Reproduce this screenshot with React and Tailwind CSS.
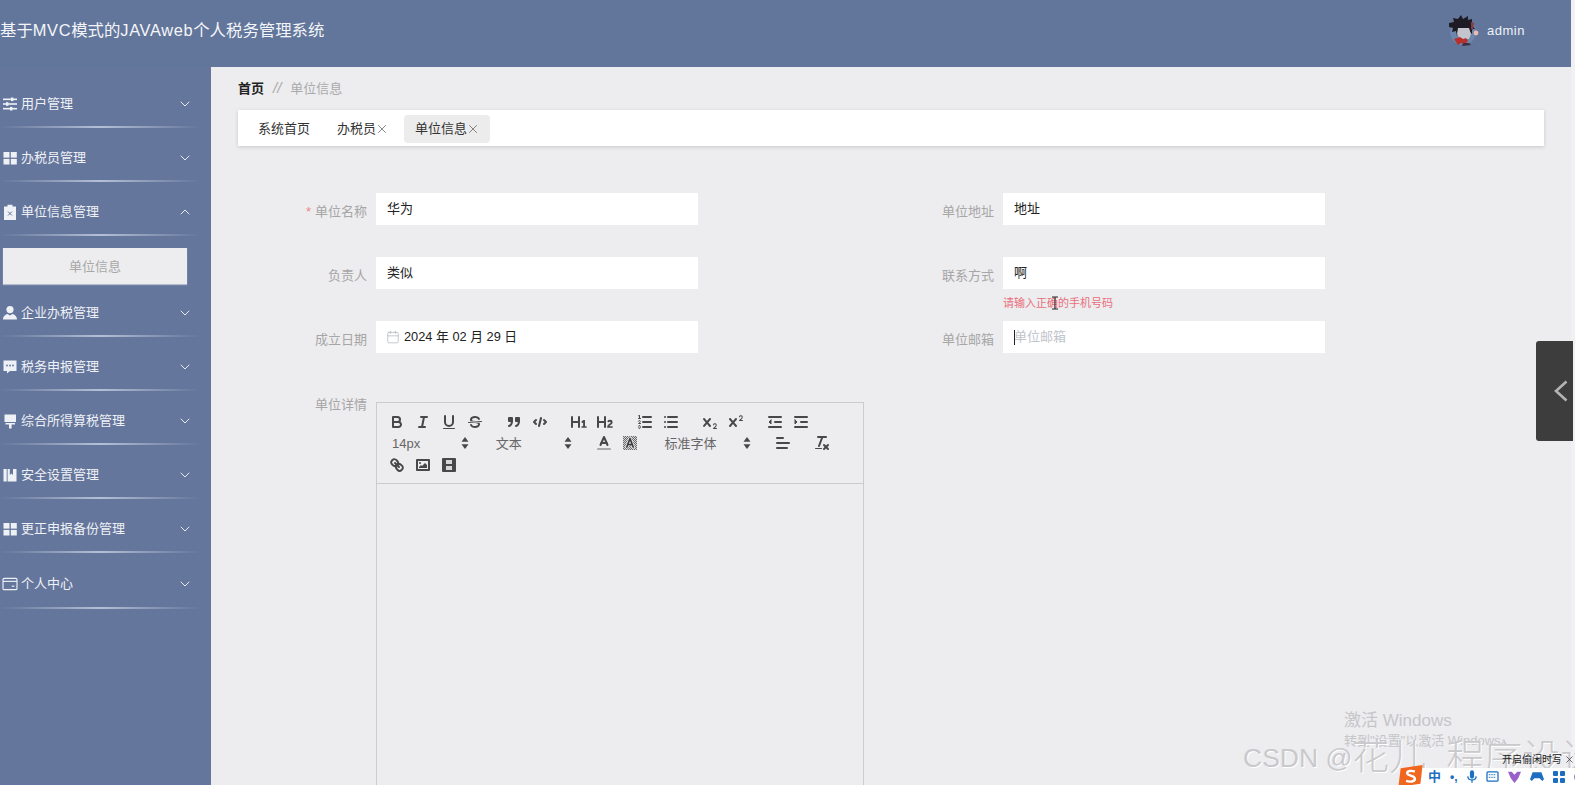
import React from "react";
import { ChevronDown, ChevronUp, X, Calendar } from "lucide-react";

const I = ({ children, className = "" }) => (
  <svg viewBox="0 0 18 18" width="18" height="18" fill="none" stroke="#484848" strokeWidth="2" strokeLinecap="round" strokeLinejoin="round" className={className}>
    {children}
  </svg>
);
const F = (p) => <path fill="#484848" stroke="none" {...p} />;

const toolIcons = {
  bold: <><path d="M5,4H9.5A2.5,2.5,0,0,1,12,6.5v0A2.5,2.5,0,0,1,9.5,9H5V4Z" /><path d="M5,9h5.5A2.5,2.5,0,0,1,13,11.5v0A2.5,2.5,0,0,1,10.5,14H5V9Z" /></>,
  italic: <><line x1="7" x2="13" y1="4" y2="4" /><line x1="5" x2="11" y1="14" y2="14" /><line x1="8" x2="10" y1="14" y2="4" /></>,
  underline: <><path d="M5,3V9a4,4,0,0,0,4,4H9a4,4,0,0,0,4-4V3" /><rect fill="#484848" stroke="none" height="1" rx=".5" width="12" x="3" y="15" /></>,
  strike: <><line strokeWidth="1" x1="15.5" x2="2.5" y1="8.5" y2="9.5" /><F d="M9.007,8C6.542,7.791,6,7.519,6,6.5,6,5.792,7.283,5,9,5c1.571,0,2.765.679,2.969,1.309a1,1,0,0,0,1.9-.617C13.356,4.106,11.354,3,9,3,6.2,3,4,4.538,4,6.5a3.2,3.2,0,0,0,.5,1.843Z" /><F d="M8.984,10C11.457,10.208,12,10.479,12,11.5c0,.708-1.283,1.5-3,1.5-1.571,0-2.765-.679-2.969-1.309a1,1,0,1,0-1.9.617C4.644,13.894,6.646,15,9,15c2.8,0,5-1.538,5-3.5a3.2,3.2,0,0,0-.5-1.843Z" /></>,
  quote: <><rect fill="#484848" height="3" width="3" x="4" y="5" /><rect fill="#484848" height="3" width="3" x="11" y="5" /><path d="M7,8c0,4.031-3,5-3,5" /><path d="M14,8c0,4.031-3,5-3,5" /></>,
  code: <><polyline points="5 7 3 9 5 11" /><polyline points="13 7 15 9 13 11" /><line x1="10" x2="8" y1="5" y2="13" /></>,
  h1: <F d="M10,4V14a1,1,0,0,1-2,0V10H3v4a1,1,0,0,1-2,0V4A1,1,0,0,1,3,4V8H8V4a1,1,0,0,1,2,0Zm6.06787,9.209H14.98975V7.59863a.54085.54085,0,0,0-.605-.60547h-.62744a1.01119,1.01119,0,0,0-.748.29688L11.645,8.56641a.5435.5435,0,0,0-.022.8584l.28613.30762a.53861.53861,0,0,0,.84717.0332l.09912-.08789a1.2137,1.2137,0,0,0,.2417-.35254h.02246s-.01123.30859-.01123.60547V13.209H12.041a.54085.54085,0,0,0-.605.60547v.43945a.54085.54085,0,0,0,.605.60547h4.02686a.54085.54085,0,0,0,.605-.60547v-.43945A.54085.54085,0,0,0,16.06787,13.209Z" />,
  h2: <F d="M16.73975,13.81445v.43945a.54085.54085,0,0,1-.605.60547H11.855a.58392.58392,0,0,1-.64893-.60547V14.0127c0-2.90527,3.39941-3.42187,3.39941-4.55469a.77675.77675,0,0,0-.84717-.78125,1.17684,1.17684,0,0,0-.83594.38477c-.2749.26367-.561.374-.85791.13184l-.4292-.34082c-.30811-.24219-.38525-.51758-.1543-.81445a2.97155,2.97155,0,0,1,2.45361-1.17676,2.45393,2.45393,0,0,1,2.68408,2.40918c0,2.45312-3.1792,2.92676-3.27832,3.93848h2.79443A.54085.54085,0,0,1,16.73975,13.81445ZM9,3A.99974.99974,0,0,0,8,4V8H3V4A1,1,0,0,0,1,4V14a1,1,0,0,0,2,0V10H8v4a1,1,0,0,0,2,0V4A.99974.99974,0,0,0,9,3Z" />,
  ol: <><line x1="7" x2="15" y1="4" y2="4" /><line x1="7" x2="15" y1="9" y2="9" /><line x1="7" x2="15" y1="14" y2="14" /><line strokeWidth="1" x1="2.5" x2="4.5" y1="5.5" y2="5.5" /><F d="M3.5,6A0.5,0.5,0,0,1,3,5.5V3.085l-0.276.138A0.5,0.5,0,0,1,2.053,3c-0.124-.247-0.023-0.324.224-0.447l1-.5A0.5,0.5,0,0,1,4,2.5v3A0.5,0.5,0,0,1,3.5,6Z" /><path strokeWidth="1" d="M4.5,10.5h-2c0-.234,1.85-1.076,1.85-2.234A0.959,0.959,0,0,0,2.5,8.156" /><path strokeWidth="1" d="M2.5,14.846a0.959,0.959,0,0,0,1.85-.109A0.7,0.7,0,0,0,3.75,14a0.688,0.688,0,0,0,.6-0.736,0.959,0.959,0,0,0-1.85-.109" /></>,
  ul: <><line x1="6" x2="15" y1="4" y2="4" /><line x1="6" x2="15" y1="9" y2="9" /><line x1="6" x2="15" y1="14" y2="14" /><line x1="3" x2="3" y1="4" y2="4" /><line x1="3" x2="3" y1="9" y2="9" /><line x1="3" x2="3" y1="14" y2="14" /></>,
  sub: <><F d="M15.5,15H13.861a3.858,3.858,0,0,0,1.914-2.975,1.8,1.8,0,0,0-1.6-1.751A1.921,1.921,0,0,0,12.021,11.7a0.50013,0.50013,0,1,0,.957.291h0a0.914,0.914,0,0,1,1.053-.725,0.81,0.81,0,0,1,.744.762c0,1.076-1.16971,1.86982-1.93971,2.43082A1.45639,1.45639,0,0,0,12,15.5a0.5,0.5,0,0,0,.5.5h3A0.5,0.5,0,0,0,15.5,15Z" /><F d="M9.65,5.241a1,1,0,0,0-1.409.108L6,7.964,3.759,5.349A1,1,0,0,0,2.192,6.59178Q2.25,6.674,2.317,6.751L4.683,9.5,2.317,12.249a1,1,0,0,0,1.519,1.3L6,11.036l2.241,2.615a1,1,0,0,0,1.519-1.3L7.317,9.5,9.759,6.651A1,1,0,0,0,9.65,5.241Z" /></>,
  sup: <><F d="M15.5,7H13.861a4.015,4.015,0,0,0,1.914-2.975,1.8,1.8,0,0,0-1.6-1.751A1.922,1.922,0,0,0,12.021,3.7a0.5,0.5,0,1,0,.957.291,0.917,0.917,0,0,1,1.053-.725,0.81,0.81,0,0,1,.744.762c0,1.077-1.164,1.925-1.934,2.486A1.423,1.423,0,0,0,12,7.5a0.5,0.5,0,0,0,.5.5h3A0.5,0.5,0,0,0,15.5,7Z" /><F d="M9.651,5.241a1,1,0,0,0-1.41.108L6,7.964,3.759,5.349a1,1,0,1,0-1.519,1.3L4.683,9.5,2.241,12.35a1,1,0,1,0,1.519,1.3L6,11.036l2.241,2.615a1,1,0,0,0,1.519-1.3L7.317,9.5,9.759,6.651A1,1,0,0,0,9.651,5.241Z" /></>,
  outdent: <><line x1="3" x2="15" y1="14" y2="14" /><line x1="3" x2="15" y1="4" y2="4" /><line x1="9" x2="15" y1="9" y2="9" /><polyline fill="#484848" stroke="#484848" strokeWidth="1" points="5 7 5 11 3 9 5 7" /></>,
  indent: <><line x1="3" x2="15" y1="14" y2="14" /><line x1="3" x2="15" y1="4" y2="4" /><line x1="9" x2="15" y1="9" y2="9" /><polyline fill="#484848" stroke="#484848" strokeWidth="1" points="3 7 3 11 5 9 3 7" /></>,
  color: <><line stroke="#a8a8a8" x1="3" x2="15" y1="15" y2="15" /><polyline points="5.5 11 9 3 12.5 11" /><line x1="11.63" x2="6.38" y1="9" y2="9" /></>,
  background: (
    <>
      <defs>
        <pattern id="bgdots" width="2" height="2" patternUnits="userSpaceOnUse">
          <rect width="2" height="2" fill="#d4d4d6" stroke="none" />
          <rect width="1" height="1" fill="#6a6a6a" stroke="none" />
          <rect x="1" y="1" width="1" height="1" fill="#6a6a6a" stroke="none" />
        </pattern>
      </defs>
      <rect x="2" y="2" width="14" height="14" fill="url(#bgdots)" stroke="none" />
      <polyline stroke="#e4e4e6" strokeWidth="3.4" points="5.8 13 9 4.500 12.200 13" />
      <polyline stroke="#3c3c3c" strokeWidth="1.7" points="5.8 13 9 4.500 12.200 13" />
      <line stroke="#3c3c3c" strokeWidth="1.5" x1="11.2" x2="6.8" y1="10.500" y2="10.500" />
    </>
  ),
  align: <><line x1="3" x2="15" y1="9" y2="9" /><line x1="3" x2="13" y1="14" y2="14" /><line x1="3" x2="9" y1="4" y2="4" /></>,
  clean: <><line x1="5" x2="13" y1="3" y2="3" /><line x1="6" x2="9.35" y1="12" y2="3" /><line x1="11" x2="15" y1="11" y2="15" /><line x1="15" x2="11" y1="11" y2="15" /><rect fill="#484848" stroke="none" rx=".5" width="7" height="1" x="2" y="14" /></>,
  link: <><line x1="7" x2="11" y1="7" y2="11" /><path d="M8.9,4.577a3.476,3.476,0,0,1,.36,4.679A3.476,3.476,0,0,1,4.577,8.9C3.185,7.5,2.035,6.4,4.217,4.217S7.5,3.185,8.9,4.577Z" /><path d="M13.423,9.1a3.476,3.476,0,0,0-4.679-.36,3.476,3.476,0,0,0,.36,4.679c1.392,1.392,2.5,2.542,4.679.36S14.815,10.5,13.423,9.1Z" /></>,
  image: <><rect height="10" width="12" x="3" y="4" /><circle fill="#484848" stroke="none" cx="6" cy="7" r="1" /><polyline fill="#484848" stroke="none" points="5 12 5 11 7 9 8 10 11 7 13 9 13 12 5 12" /></>,
  video: <><rect fill="#484848" stroke="none" x="2" y="2" width="14" height="14" rx="1" /><rect fill="#d8d8da" stroke="none" x="6" y="4" width="6" height="4" /><rect fill="#d8d8da" stroke="none" x="6" y="10" width="6" height="4" /></>,
};

const Tool = ({ k }) => (
  <span className="flex h-[21.5px] w-[26px] items-center justify-center">
    <I>{toolIcons[k]}</I>
  </span>
);

const Group = ({ items }) => (
  <span className="mr-[13.2px] flex">
    {items.map((k) => (
      <Tool key={k} k={k} />
    ))}
  </span>
);

const Picker = ({ label, w }) => (
  <span className={`mr-[13.2px] flex h-[21.5px] items-center justify-between pl-[8px] pr-[1px] text-[13px] text-[#666] ${w}`}>
    <span>{label}</span>
    <svg viewBox="0 0 18 18" width="18" height="18" fill="#484848">
      <polygon points="9 3 12.500 7.800 5.500 7.800" />
      <polygon points="9 15 12.500 10.200 5.500 10.200" />
    </svg>
  </span>
);

const W = ({ children }) => (
  <svg viewBox="0 0 16 16" width="16" height="16" fill="#eef1f6" className="shrink-0">
    {children}
  </svg>
);

const menuIcons = {
  sliders: <W><rect x="1" y="2.5" width="14" height="1.6" /><rect x="1" y="7.2" width="14" height="1.6" /><rect x="1" y="11.9" width="14" height="1.6" /><rect x="9" y="1.5" width="2.4" height="3.6" /><rect x="4" y="6.2" width="2.4" height="3.6" /><rect x="8" y="10.9" width="2.4" height="3.6" /></W>,
  grid: <W><rect x="1.5" y="2" width="6" height="5.6" /><rect x="8.8" y="2" width="6" height="5.6" /><rect x="1.5" y="8.9" width="6" height="5.6" /><rect x="8.8" y="8.9" width="6" height="5.6" /></W>,
  clip: <W><path d="M2 2.500h3.500V.8h5v1.700H14v14.200H2z" /><path d="M6 7.500l4 4M10 7.500l-4 4" stroke="#64759d" strokeWidth="1" /></W>,
  user: <W><circle cx="8" cy="4.600" r="3.600" /><path d="M1 14.500c0-3.200 2.600-5 4.600-5.400L8 10.600l2.400-1.500c2 .4 4.600 2.200 4.600 5.400z" /></W>,
  chat: <W><path d="M1.500 1.500h13v10.500H8l-3 2.600V12H1.500z" /><circle cx="5" cy="6.500" r=".9" fill="#64759d" /><circle cx="8" cy="6.500" r=".9" fill="#64759d" /><circle cx="11" cy="6.500" r=".9" fill="#64759d" /></W>,
  brush: <W><rect x="2.500" y="1.500" width="11.500" height="7.500" /><path d="M3.500 10h9.500v1.600H9.600V15.500H7v-3.900H3.500z" /></W>,
  book: <W><rect x="1.500" y="2" width="3.200" height="12.500" /><path d="M5.600 2h2.200v6l1.600-1.400L11 8V2h3.500v12.500H5.600z" /></W>,
  card: (
    <svg viewBox="0 0 18 16" width="16" height="14" fill="none" stroke="#eef1f6" strokeWidth="1.3" className="shrink-0">
      <rect x="1" y="1.500" width="16" height="13" rx="1.500" />
      <line x1="1" x2="17" y1="5" y2="5" />
      <line x1="11" x2="14" y1="10.500" y2="10.500" />
    </svg>
  ),
};

const menus = [
  { t: "用户管理", i: "sliders" },
  { t: "办税员管理", i: "grid" },
  { t: "单位信息管理", i: "clip", open: true },
  { t: "企业办税管理", i: "user", pt: "pt-[15px]" },
  { t: "税务申报管理", i: "chat" },
  { t: "综合所得算税管理", i: "brush" },
  { t: "安全设置管理", i: "book" },
  { t: "更正申报备份管理", i: "grid" },
  { t: "个人中心", i: "card", pt: "pt-[17px]", pb: "pb-[9px]" },
];

const MenuItem = ({ m }) => (
  <div>
    <div className={`${m.pt || "pt-[16px]"} ${m.pb || "pb-[8px]"}`}>
      <div className="flex h-[28px] items-center pl-[2px] pr-[18px] text-[13px] text-[#eef1f6]">
        <span className="flex w-[19px] shrink-0">{menuIcons[m.i]}</span>
        <span className="flex-1">{m.t}</span>
        {m.open ? <ChevronUp size={16} strokeWidth={1.5} color="#e6eaf1" /> : <ChevronDown size={16} strokeWidth={1.5} color="#e6eaf1" />}
      </div>
    </div>
    <div className="h-[2px] w-[200px] bg-linear-to-r from-transparent via-[#b4c0d6] to-transparent" />
    {m.open && (
      <div className="ml-[3px] mt-[12px] flex h-[36px] w-[184px] items-center justify-center bg-[#ededef] pt-[1px] text-[13px] text-[#a8a8a8] shadow-[0_1px_1px_rgba(255,255,255,0.5)]">
        单位信息
      </div>
    )}
  </div>
);

const Field = ({ label, required, children }) => (
  <div className="flex h-[32px] items-center">
    <label className="mr-[9px] w-[129px] pt-[5px] text-right text-[13px] text-[#a6a6a6]">
      {required && <span className="mr-[4px] text-[#ee8a8a]">*</span>}
      {label}
    </label>
    <div className="relative flex h-[32px] w-[322px] items-center bg-white px-[11px] text-[13px] text-[#222]">{children}</div>
  </div>
);

const Avatar = () => (
  <svg viewBox="0 0 30 32" width="30" height="32">
    <circle cx="14" cy="17" r="13" fill="#6d86ab" />
    <path d="M0 8l5-1-1-4 5 1 3-4 2 4 5-3 0 4 4-1 0 6 3 4-3 0 0 5-4-4-8 0-3 6-1-5-4 1 1-4-4-1z" fill="#1e1b24" />
    <path d="M9 13h11l2 6-2 5h-9l-3-5z" fill="#c4c5cc" />
    <path d="M22 7l3 1-1 7-2-1z" fill="#8a3a40" />
    <circle cx="27" cy="18" r="2.400" fill="#e8bcae" />
    <path d="M5 24l6-2 3 2 3-1 2 3-3 3-4-1-3 2z" fill="#b8302e" />
    <path d="M14 28h6l2 2-9 1z" fill="#3a3040" />
  </svg>
);

export default function App() {
  return (
    <div className="relative flex h-[785px] w-[1575px] overflow-hidden bg-[#f1f0f3] [font-family:'Liberation_Sans','Noto_Sans_CJK_SC',sans-serif]">
      <div className="flex w-[1571px] shrink-0 flex-col">
        <header className="flex h-[67px] shrink-0 items-center justify-between bg-[#62759b] pb-[6px] pr-[46px]">
          <h1 className="text-[16.4px] font-normal text-[#f4f5f8]">
            基于<span className="tracking-[0.65px]">MVC</span>模式的<span className="tracking-[0.65px]">JAVAweb</span>个人税务管理系统
          </h1>
          <div className="flex items-center gap-[8px]">
            <Avatar />
            <span className="text-[13px] tracking-[0.5px] text-[#eef2f8]">admin</span>
          </div>
        </header>
        <div className="flex min-h-0 flex-1">
          <aside className="w-[211px] shrink-0 bg-[#65769c] pt-[7px]">
            {menus.map((m) => (
              <MenuItem key={m.t + m.i} m={m} />
            ))}
          </aside>
          <main className="min-w-0 flex-1 bg-[#edecef] px-[27px]">
            <div className="flex h-[43px] items-center text-[13px]">
              <span className="font-bold text-[#222]">首页</span>
              <span className="mx-[9px] text-[15px] italic text-[#aaa]">//</span>
              <span className="text-[#aaa]">单位信息</span>
            </div>
            <div className="flex h-[36px] items-center gap-[5px] bg-white pl-[9px] pt-[2px] text-[13px] text-[#333] shadow-[0_1px_4px_rgba(0,0,0,0.16)]">
              <span className="flex h-[28px] items-center px-[11px]">系统首页</span>
              <span className="flex h-[28px] items-center pl-[11px] pr-[10px]">
                办税员
                <X size={14} strokeWidth={1.2} color="#555" className="-ml-px" />
              </span>
              <span className="flex h-[28px] items-center rounded-[4px] bg-[#ececec] pl-[11px] pr-[10px]">
                单位信息
                <X size={14} strokeWidth={1.2} color="#555" className="-ml-px" />
              </span>
            </div>

            <div className="mt-[47px] grid grid-cols-[627px_1fr] gap-y-[32px]">
              <Field label="单位名称" required>华为</Field>
              <Field label="单位地址">地址</Field>
              <Field label="负责人">类似</Field>
              <Field label="联系方式">
                啊
                <span className="absolute left-0 top-[39px] text-[11px] leading-[14px] text-[#e9707c]">请输入正确的手机号码</span>
                <svg viewBox="0 0 8 14" width="8" height="14" fill="none" stroke="#222" strokeWidth="1" className="absolute left-[48px] top-[39px]">
                  <path d="M1 1h6M4 1v12M1 13h6" />
                </svg>
              </Field>
              <Field label="成立日期">
                <Calendar size={14} strokeWidth={1.2} color="#aeb1b8" className="-ml-px mr-[4px] shrink-0" />
                <span className="text-[12.8px]">2024 年 02 月 29 日</span>
              </Field>
              <Field label="单位邮箱">
                <span className="absolute left-[11px] top-[9px] h-[15px] w-px bg-[#222]" />
                <span className="text-[#c0c4cc]">单位邮箱</span>
              </Field>
            </div>

            <div className="mt-[49px] flex">
              <label className="-mt-[7px] mr-[9px] w-[129px] text-right text-[13px] text-[#a6a6a6]">单位详情</label>
              <div className="w-[488px] border border-[#ccc]">
                <div className="flex flex-wrap border-b border-[#ccc] pb-[7px] pl-[7px] pr-[6px] pt-[8px]">
                  <Group items={["bold", "italic", "underline", "strike"]} />
                  <Group items={["quote", "code"]} />
                  <Group items={["h1", "h2"]} />
                  <Group items={["ol", "ul"]} />
                  <Group items={["sub", "sup"]} />
                  <Group items={["outdent", "indent"]} />
                  <Picker label="14px" w="w-[90.5px]" />
                  <Picker label="文本" w="w-[90.5px]" />
                  <Group items={["color", "background"]} />
                  <Picker label="标准字体" w="w-[100px]" />
                  <Group items={["align"]} />
                  <Group items={["clean"]} />
                  <Group items={["link", "image", "video"]} />
                </div>
                <div className="h-[400px]" />
              </div>
            </div>
          </main>
        </div>
      </div>

      <div className="absolute left-[1536px] top-[341px] flex h-[100px] w-[37px] items-center justify-end rounded-l-[3px] bg-[#3d3d3d] pr-[5px]">
        <svg viewBox="0 0 14 22" width="14" height="22" fill="none" stroke="#b4b4b4" strokeWidth="2.6">
          <polyline points="12.500 1.500 2 11 12.500 20.500" />
        </svg>
      </div>

      <div className="absolute left-[1344px] top-[710px] text-[17px] leading-[22px] text-[#c6c6c9]">激活 Windows</div>
      <div className="absolute left-[1344px] top-[733px] text-[13px] leading-[16px] text-[#c6c6c9]">转到"设置"以激活 Windows。</div>
      <div className="absolute left-[1243px] top-[738px] flex h-[40px] items-center whitespace-nowrap text-[26.5px] leading-[34px] text-[#c9c9cc] [text-shadow:1px_1px_0_#fff]">
        <span>CSDN @</span>
        <span className="text-[37px] font-light">花儿</span>
        <span className="inline-block w-[20px] -translate-y-[16px] text-[16px]">、</span>
        <span className="text-[38px] font-light">程序设计</span>
      </div>

      <div className="absolute left-[1502px] top-[750px] flex h-[18px] w-[73px] items-center justify-between whitespace-nowrap text-[10px] text-[#222]">
        <span>开启偷闲时写</span>
        <X size={11} strokeWidth={1.4} color="#222" />
      </div>
      <div className="absolute left-[1400px] top-[768px] flex h-[17px] w-[175px] items-center gap-[9px] overflow-hidden bg-white pl-[28px]">
        <span className="text-[13px] font-bold leading-none text-[#1c6fc0]">中</span>
        <span className="text-[12px] font-bold leading-none text-[#1c6fc0]">•,</span>
        <svg viewBox="0 0 12 16" width="10" height="14" fill="#1c6fc0" className="shrink-0"><rect x="3.500" y="0" width="5" height="10" rx="2.500" /><path d="M1 7c0 6 10 6 10 0M6 12v3" fill="none" stroke="#1c6fc0" strokeWidth="1.500" /></svg>
        <svg viewBox="0 0 14 12" width="13" height="11" fill="none" stroke="#1c6fc0" strokeWidth="1.400" className="shrink-0"><rect x="1" y="1" width="12" height="10" rx="1" /><path d="M3 4h8M3 7h8" strokeDasharray="1 1" /></svg>
        <svg viewBox="0 0 14 14" width="13" height="13" fill="#9a5fc8" className="shrink-0"><path d="M0 2l4 0 3 3 3-3 4 0-3 7-4 5-4-5z" /></svg>
        <svg viewBox="0 0 16 12" width="14" height="11" fill="#1c6fc0" className="shrink-0"><path d="M3 1h10l3 8-2 2-3-3H5l-3 3-2-2z" /></svg>
        <svg viewBox="0 0 12 12" width="12" height="12" fill="#1c6fc0" className="shrink-0"><rect width="5" height="5" rx="1" /><rect x="7" width="5" height="5" rx="1" /><rect y="7" width="5" height="5" rx="1" /><rect x="7" y="7" width="5" height="5" rx="1" /></svg>
        <svg viewBox="0 0 12 12" width="12" height="12" fill="#9a7fd0" className="shrink-0"><circle cx="6" cy="6" r="6" /></svg>
      </div>
      <svg viewBox="0 0 24 20" width="27" height="22" className="absolute left-[1397px] top-[765px]">
        <path d="M3 3l20-3-2 17-20 3z" fill="#f0661e" />
        <path d="M16 6c-3-1-7-1-7 1.500s7 2 7 5-5 3-8 2" fill="none" stroke="#fff" strokeWidth="2.200" />
      </svg>
    </div>
  );
}
